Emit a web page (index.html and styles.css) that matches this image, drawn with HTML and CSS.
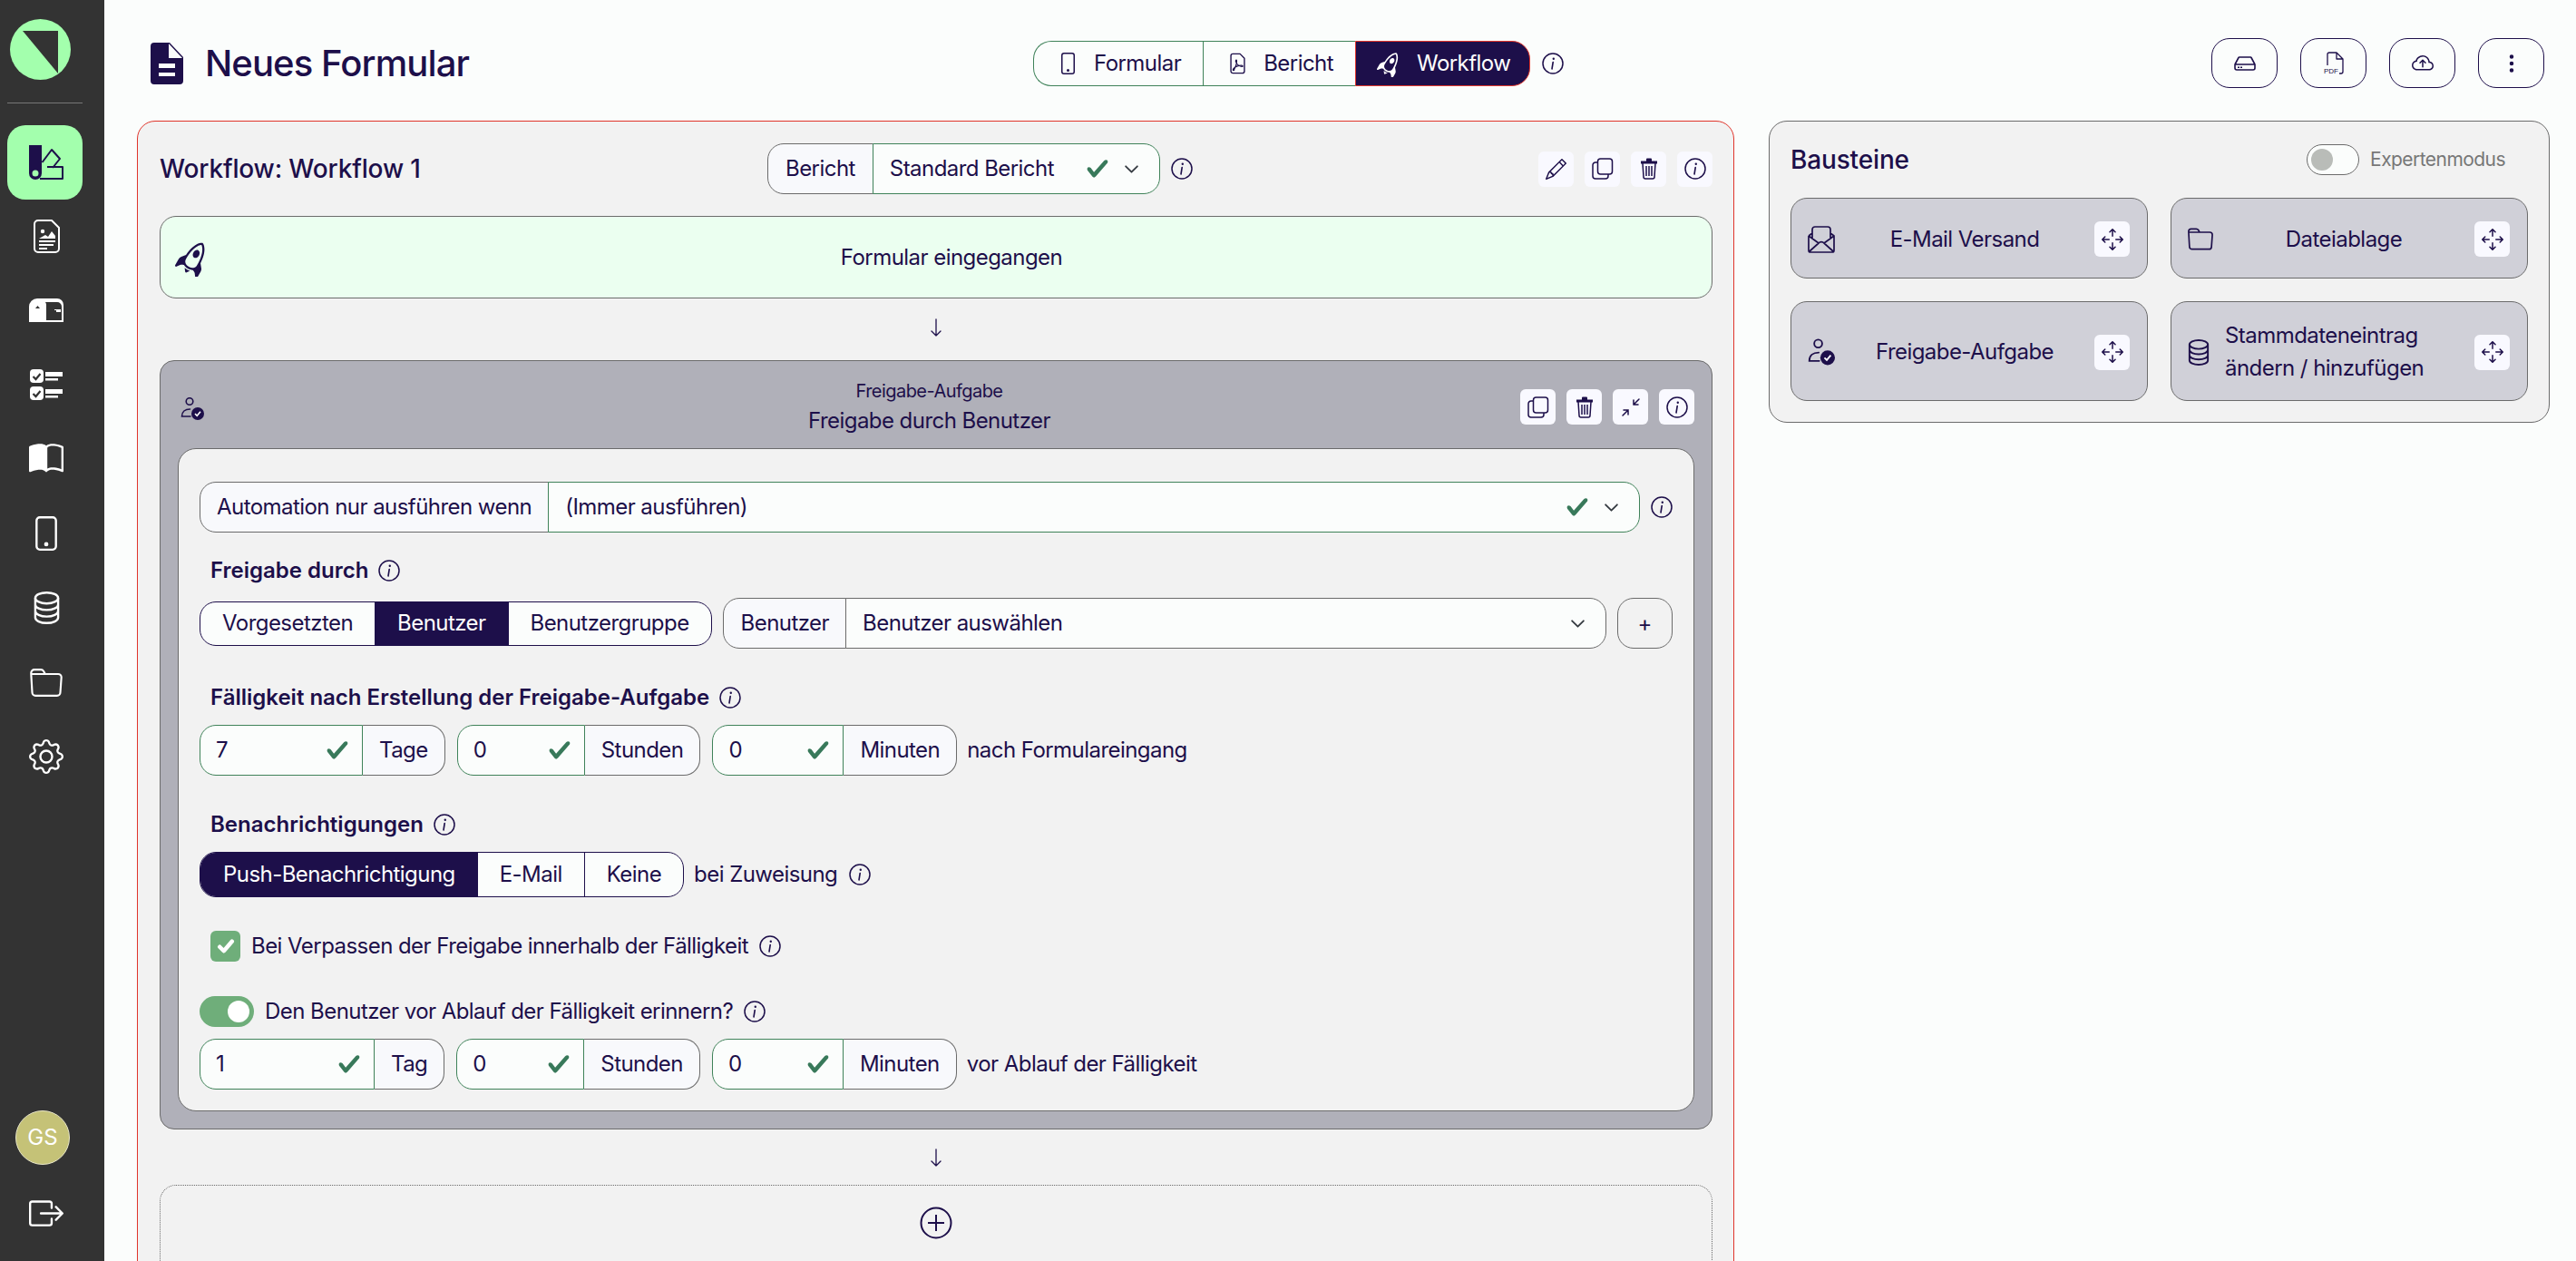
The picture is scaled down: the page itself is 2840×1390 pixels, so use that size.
FILE: index.html
```html
<!DOCTYPE html>
<html lang="de">
<head>
  <meta charset="UTF-8">
  <meta name="viewport" content="width=device-width, initial-scale=1.0">
  <title>Neues Formular</title>
  <link rel="stylesheet" href="styles.css">
</head>
<body>
  <svg class="sprite" xmlns="http://www.w3.org/2000/svg">
    <symbol id="i-info" viewBox="0 0 24 24"><circle cx="12" cy="12" r="11" fill="none" stroke="currentColor" stroke-width="1.5"/><path d="M12.2 10.5 11 18" fill="none" stroke="currentColor" stroke-width="1.6" stroke-linecap="round"/><circle cx="12.8" cy="6.8" r="1.2" fill="currentColor"/></symbol>
    <symbol id="i-check" viewBox="0 0 8 8"><path fill="currentColor" d="M2.3 6.73.6 4.53c-.4-1.04.46-1.4 1.1-.8l1.1 1.4 3.4-3.8c.6-.63 1.6-.27 1.2.7l-4 4.6c-.43.5-.8.4-1.1.1z"/></symbol>
    <symbol id="i-chevron" viewBox="0 0 16 16"><path fill="none" stroke="currentColor" stroke-width="1.7" stroke-linecap="round" stroke-linejoin="round" d="m2 5 6 6 6-6"/></symbol>
    <symbol id="i-doc" viewBox="0 0 36 46"><path fill="currentColor" d="M4 0H20V17H36V42a4 4 0 0 1-4 4H4a4 4 0 0 1-4-4V4a4 4 0 0 1 4-4z"/><path fill="none" stroke="currentColor" stroke-width="1.5" d="M20 0 36 17"/><path fill="#fbfdfc" d="M9 23H27V28H9zM9 33H27V37H9z"/></symbol>
    <symbol id="i-swatch" viewBox="0 0 38 38"><path fill="currentColor" fill-rule="evenodd" d="M0 0H14V31a7 7 0 0 1-14 0zM7 27.500a3.500 3.500 0 1 0 0 7 3.500 3.500 0 0 0 0-7z"/><path fill="none" stroke="currentColor" stroke-width="2" stroke-linejoin="round" d="M14.500 19 25 5 34 15 26 25M12 37H37V24H20"/></symbol>
    <symbol id="i-form" viewBox="0 0 29 37"><path fill="none" stroke="currentColor" stroke-width="2" stroke-linejoin="round" d="M5 1H20L28 9V32a4 4 0 0 1-4 4H5a4 4 0 0 1-4-4V5a4 4 0 0 1 4-4z"/><circle cx="10" cy="13" r="2.200" fill="currentColor"/><path fill="currentColor" d="M6 21 13 17 16 19 20 13 24 18V21zM6 23H24V25H6zM6 27H22V29H6zM6 31H15V33H6z"/></symbol>
    <symbol id="i-mailbox" viewBox="0 0 38 26"><path fill="currentColor" d="M9 0H31a7 7 0 0 1 7 7V26H0V9A9 9 0 0 1 9 0z"/><path fill="#333" d="M19 7a5 5 0 0 0-1-3H31a5 5 0 0 1 5 5V24H19z"/><path fill="currentColor" d="M28 12H35V15H30V13H28z"/><path fill="#333" d="M7 11 9.500 8 12 11z"/></symbol>
    <symbol id="i-tasks" viewBox="0 0 36 34"><g fill="currentColor"><rect width="15" height="15" rx="4"/><rect y="19" width="15" height="15" rx="4"/><rect x="17" y="3" width="19" height="5"/><rect x="17" y="10" width="14" height="2.500"/><rect x="17" y="22" width="19" height="5"/><rect x="17" y="29" width="14" height="2.500"/></g><path fill="none" stroke="#333" stroke-width="2.200" d="m3.500 8 3 3 5-6M3.500 27l3 3 5-6"/></symbol>
    <symbol id="i-book" viewBox="0 0 16 16"><path fill="currentColor" d="M8.500 2.687c.654-.689 1.782-.886 3.112-.752 1.234.124 2.503.523 3.388.893v9.923c-.918-.35-2.107-.692-3.287-.81-1.094-.111-2.278-.039-3.213.492zM8 1.783C7.015.936 5.587.81 4.287.94c-1.514.153-3.042.672-3.994 1.105A.5.5 0 0 0 0 2.500v11a.5.5 0 0 0 .707.455c.882-.4 2.303-.881 3.680-1.020 1.409-.142 2.590.087 3.223.877a.5.5 0 0 0 .78 0c.633-.79 1.814-1.019 3.222-.877 1.378.139 2.800.62 3.681 1.020A.5.5 0 0 0 16 13.500v-11a.5.5 0 0 0-.293-.455c-.952-.433-2.480-.952-3.994-1.105C10.413.809 8.985.936 8 1.783"/></symbol>
    <symbol id="i-phone" viewBox="3 0 10 16"><path fill="currentColor" d="M11 1a1 1 0 0 1 1 1v12a1 1 0 0 1-1 1H5a1 1 0 0 1-1-1V2a1 1 0 0 1 1-1zM5 0a2 2 0 0 0-2 2v12a2 2 0 0 0 2 2h6a2 2 0 0 0 2-2V2a2 2 0 0 0-2-2z"/><path fill="currentColor" d="M8 14a1 1 0 1 0 0-2 1 1 0 0 0 0 2"/></symbol>
    <symbol id="i-db" viewBox="0 0 24 30"><g fill="none" stroke="currentColor" stroke-width="2"><ellipse cx="12" cy="6" rx="10.500" ry="5"/><path d="M1.500 6V24c0 2.800 4.700 5 10.500 5s10.500-2.200 10.500-5V6M1.500 12c0 2.800 4.700 5 10.500 5s10.500-2.200 10.500-5M1.500 18c0 2.800 4.700 5 10.500 5s10.500-2.200 10.500-5"/></g></symbol>
    <symbol id="i-folder" viewBox="0 0 30 26"><path fill="none" stroke="currentColor" stroke-width="1.800" stroke-linejoin="round" d="M1 5V4a3 3 0 0 1 3-3h6a3 3 0 0 1 2.500 1.300L14 5H26a3 3 0 0 1 3 3L28 22a3 3 0 0 1-3 3H5a3 3 0 0 1-3-3L1 5H14"/></symbol>
    <symbol id="i-gear" viewBox="0 0 16 16"><path fill="currentColor" d="M8 4.754a3.246 3.246 0 1 0 0 6.492 3.246 3.246 0 0 0 0-6.492M5.754 8a2.246 2.246 0 1 1 4.492 0 2.246 2.246 0 0 1-4.492 0"/><path fill="currentColor" d="M9.796 1.343c-.527-1.790-3.065-1.790-3.592 0l-.094.319a.873.873 0 0 1-1.255.52l-.292-.16c-1.640-.892-3.433.902-2.540 2.541l.159.292a.873.873 0 0 1-.52 1.255l-.319.094c-1.790.527-1.790 3.065 0 3.592l.319.094a.873.873 0 0 1 .52 1.255l-.16.292c-.892 1.640.901 3.434 2.541 2.540l.292-.159a.873.873 0 0 1 1.255.52l.094.319c.527 1.790 3.065 1.790 3.592 0l.094-.319a.873.873 0 0 1 1.255-.52l.292.16c1.640.893 3.434-.902 2.540-2.541l-.159-.292a.873.873 0 0 1 .52-1.255l.319-.094c1.790-.527 1.790-3.065 0-3.592l-.319-.094a.873.873 0 0 1-.52-1.255l.16-.292c.893-1.640-.902-3.433-2.541-2.540l-.292.159a.873.873 0 0 1-1.255-.52zm-2.633.283c.246-.835 1.428-.835 1.674 0l.094.319a1.873 1.873 0 0 0 2.693 1.115l.291-.16c.764-.415 1.600.42 1.184 1.185l-.159.292a1.873 1.873 0 0 0 1.116 2.692l.318.094c.835.246.835 1.428 0 1.674l-.319.094a1.873 1.873 0 0 0-1.115 2.693l.16.291c.415.764-.42 1.600-1.185 1.184l-.291-.159a1.873 1.873 0 0 0-2.693 1.116l-.094.318c-.246.835-1.428.835-1.674 0l-.094-.319a1.873 1.873 0 0 0-2.692-1.115l-.292.16c-.764.415-1.600-.42-1.184-1.185l.159-.291A1.873 1.873 0 0 0 1.945 8.930l-.319-.094c-.835-.246-.835-1.428 0-1.674l.319-.094A1.873 1.873 0 0 0 3.060 4.377l-.16-.292c-.415-.764.42-1.600 1.185-1.184l.292.159a1.873 1.873 0 0 0 2.692-1.115z"/></symbol>
    <symbol id="i-logout" viewBox="0 2 16 12"><path fill="currentColor" d="M10 12.500a.5.5 0 0 1-.5.5h-8a.5.5 0 0 1-.5-.5v-9a.5.5 0 0 1 .5-.5h8a.5.5 0 0 1 .5.5v2a.5.5 0 0 0 1 0v-2A1.500 1.500 0 0 0 9.500 2h-8A1.500 1.500 0 0 0 0 3.500v9A1.500 1.500 0 0 0 1.500 14h8a1.500 1.500 0 0 0 1.500-1.500v-2a.5.5 0 0 0-1 0z"/><path fill="currentColor" d="M15.854 8.354a.5.5 0 0 0 0-.708l-3-3a.5.5 0 0 0-.708.708L14.293 7.500H5.500a.5.5 0 0 0 0 1h8.793l-2.147 2.146a.5.5 0 0 0 .708.708z"/></symbol>
    <symbol id="i-rocket" viewBox="-1 -1 18 18"><g transform="rotate(30 8 8)" fill="currentColor"><path d="M8 8c.828 0 1.500-.895 1.500-2S8.828 4 8 4s-1.500.895-1.500 2S7.172 8 8 8"/><path d="M11.953 8.810c-.195-3.388-.968-5.507-1.777-6.819C9.707 1.233 9.230.751 8.857.454a3.500 3.500 0 0 0-.463-.315A2 2 0 0 0 8.250.064.55.55 0 0 0 8 0a.55.55 0 0 0-.266.073 2 2 0 0 0-.142.08 4 4 0 0 0-.459.33c-.37.308-.844.803-1.310 1.570-.805 1.322-1.577 3.433-1.774 6.756l-1.497 1.826-.004.005A2.500 2.500 0 0 0 2 12.202V15.500a.5.5 0 0 0 .9.3l1.125-1.500c.166-.222.42-.4.752-.57.214-.108.414-.192.625-.281l.198-.084c.7.428 1.550.635 2.400.635s1.700-.207 2.400-.635q.1.044.196.083c.213.09.413.174.627.282.332.17.586.348.752.57l1.125 1.500a.5.5 0 0 0 .9-.3v-3.298a2.500 2.500 0 0 0-.548-1.562zM8.009 1.073q.096.06.226.163c.284.226.683.621 1.090 1.280C10.137 3.836 11 6.237 11 10.500c0 .858-.374 1.480-.943 1.893C9.517 12.786 8.781 13 8 13s-1.517-.214-2.057-.607C5.373 11.979 5 11.358 5 10.500c0-4.182.86-6.586 1.677-7.928.409-.67.81-1.082 1.096-1.320q.136-.113.236-.18Z"/><path d="M9.479 14.361c-.48.093-.98.139-1.479.139s-.999-.046-1.479-.139L7.600 15.800a.5.5 0 0 0 .8 0z"/><path d="M4.200 9.500 2.500 11.500V15L5 13 4.200 9.500zM11.800 9.500 13.500 11.500V15L11 13z"/></g></symbol>
    <symbol id="i-pdf-file" viewBox="0 0 16 22"><path fill="none" stroke="currentColor" stroke-width="1.300" stroke-linejoin="round" d="M3 1H10.500L15 5.500V19a2 2 0 0 1-2 2H3a2 2 0 0 1-2-2V3a2 2 0 0 1 2-2z"/><path fill="none" stroke="currentColor" stroke-width="1.100" d="M3 18C5.500 17 7.500 10 7 8c-.4-1.500-1.500-.3-.8 1.500.8 2.200 3.800 4.800 6.300 4.800 1.200 0 .8-1.300-.5-1.300-2.500 0-6.500 1-8.500 3.500-.7.9-.3 2.200.5 1.500z"/></symbol>
    <symbol id="i-pencil" viewBox="0 0 16 16"><path fill="currentColor" d="M12.146.146a.5.5 0 0 1 .708 0l3 3a.5.5 0 0 1 0 .708l-10 10a.5.5 0 0 1-.168.11l-5 2a.5.5 0 0 1-.65-.65l2-5a.5.5 0 0 1 .11-.168zM11.207 2.500 13.500 4.793 14.793 3.500 12.500 1.207zm1.586 3L10.500 3.207 4 9.707V10h.5a.5.5 0 0 1 .5.5v.5h.5a.5.5 0 0 1 .5.5v.5h.293zm-9.761 5.175-.106.106-1.528 3.821 3.821-1.528.106-.106A.5.5 0 0 1 5 12.500V12h-.5a.5.5 0 0 1-.5-.5V11h-.5a.5.5 0 0 1-.468-.325"/></symbol>
    <symbol id="i-copy" viewBox="0 0 24 24"><g fill="none" stroke="currentColor" stroke-width="1.500" stroke-linejoin="round"><rect x="6.500" y="1" width="16" height="17" rx="3"/><path d="M6.500 5H4a3 3 0 0 0-3 3V20a3 3 0 0 0 3 3H15a3 3 0 0 0 3-3V18"/></g></symbol>
    <symbol id="i-trash" viewBox="0 0 20 24"><g fill="none" stroke="currentColor" stroke-width="1.500" stroke-linejoin="round"><path d="M3 6 4 21a2 2 0 0 0 2 2H14a2 2 0 0 0 2-2L17 6M7 9V20M10 9V20M13 9V20"/></g><path fill="currentColor" d="M1 3.500H7V1.500A1 1 0 0 1 8 .5H12A1 1 0 0 1 13 1.500V3.500H19V6.500H1z"/></symbol>
    <symbol id="i-contract" viewBox="0 0 24 24"><path fill="none" stroke="currentColor" stroke-width="1.500" stroke-linecap="round" d="M21 3 15 9M15 4V9H20M3 21 9 15M4 15H9V20"/></symbol>
    <symbol id="i-move" viewBox="0 0 16 16"><path fill="currentColor" d="M7.646.146a.5.5 0 0 1 .708 0l2 2a.5.5 0 0 1-.708.708L8.500 1.707V5.500a.5.5 0 0 1-1 0V1.707L6.354 2.854a.5.5 0 1 1-.708-.708zM8 10a.5.5 0 0 1 .5.5v3.793l1.146-1.147a.5.5 0 0 1 .708.708l-2 2a.5.5 0 0 1-.708 0l-2-2a.5.5 0 0 1 .708-.708L7.500 14.293V10.500A.5.5 0 0 1 8 10M.146 8.354a.5.5 0 0 1 0-.708l2-2a.5.5 0 1 1 .708.708L1.707 7.500H5.500a.5.5 0 0 1 0 1H1.707l1.147 1.146a.5.5 0 0 1-.708.708zM10 8a.5.5 0 0 1 .5-.5h3.793l-1.147-1.146a.5.5 0 0 1 .708-.708l2 2a.5.5 0 0 1 0 .708l-2 2a.5.5 0 0 1-.708-.708L14.293 8.500H10.500A.5.5 0 0 1 10 8"/></symbol>
    <symbol id="i-user-check" viewBox="0 0 26 25"><g fill="none" stroke="currentColor" stroke-width="1.600" stroke-linecap="round"><circle cx="10" cy="4.500" r="3.800"/><path d="M11 21H1.500C1.500 16 5 13 10.500 13"/></g><circle cx="19" cy="18" r="7" fill="currentColor"/><path fill="none" stroke="#fff" stroke-width="1.600" d="m16 18 2.200 2.200 3.800-4.500"/></symbol>
    <symbol id="i-drive" viewBox="0 0 24 16"><path fill="none" stroke="currentColor" stroke-width="1.600" stroke-linejoin="round" d="M1 9 5 1.500A1 1 0 0 1 6 1H18a1 1 0 0 1 1 .5L23 9M1 9H23V13a2 2 0 0 1-2 2H3a2 2 0 0 1-2-2z"/><path fill="currentColor" d="M4 11.500H6V13H4zM7 11.500H9V13H7z"/></symbol>
    <symbol id="i-pdf" viewBox="0 0 22 25"><path fill="none" stroke="currentColor" stroke-width="1.300" stroke-linejoin="round" d="M4 15V3a2 2 0 0 1 2-2H14L21 8V22a2 2 0 0 1-2 2H17M14 1V8H21"/><text x="0" y="24" class="pdf-mark">PDF</text></symbol>
    <symbol id="i-cloud" viewBox="0 0 16 16"><path fill="currentColor" d="M7.646 5.146a.5.5 0 0 1 .708 0l2 2a.5.5 0 0 1-.708.708L8.500 6.707V10.500a.5.5 0 0 1-1 0V6.707L6.354 7.854a.5.5 0 1 1-.708-.708z"/><path fill="currentColor" d="M4.406 3.342A5.530 5.530 0 0 1 8 2c2.690 0 4.923 2 5.166 4.579C14.758 6.804 16 8.137 16 9.773 16 11.569 14.502 13 12.687 13H3.781C1.708 13 0 11.366 0 9.318c0-1.763 1.266-3.223 2.942-3.593.143-.863.698-1.723 1.464-2.383m.653.757c-.757.653-1.153 1.440-1.153 2.056v.448l-.445.049C2.064 6.805 1 7.952 1 9.318 1 10.785 2.230 12 3.781 12h8.906C13.980 12 15 10.988 15 9.773c0-1.216-1.020-2.228-2.313-2.228h-.5v-.5C12.188 4.825 10.328 3 8 3a4.530 4.530 0 0 0-2.941 1.100z"/></symbol>
    <symbol id="i-dots" viewBox="0 0 16 16"><path fill="currentColor" d="M9.500 13a1.500 1.500 0 1 1-3 0 1.500 1.500 0 0 1 3 0m0-5a1.500 1.500 0 1 1-3 0 1.500 1.500 0 0 1 3 0m0-5a1.500 1.500 0 1 1-3 0 1.500 1.500 0 0 1 3 0"/></symbol>
    <symbol id="i-mail" viewBox="0 0 30 30"><path fill="none" stroke="currentColor" stroke-width="1.700" stroke-linejoin="round" d="M1 11V27a2 2 0 0 0 2 2H27a2 2 0 0 0 2-2V11L25 8M1 11 5 8M1 11 12 19M29 11 18 19M2 28 12 19a4 4 0 0 1 6 0L28 28M5 14V4a3 3 0 0 1 3-3H22a3 3 0 0 1 3 3V14"/></symbol>
    <symbol id="i-plus-circle" viewBox="0 0 36 36"><g fill="none" stroke="currentColor" stroke-width="2"><circle cx="18" cy="18" r="16.500"/><path d="M18 9V27M9 18H27"/></g></symbol>
    <symbol id="i-down" viewBox="0 0 16 20"><path fill="none" stroke="currentColor" stroke-width="1.300" stroke-linecap="round" stroke-linejoin="round" d="M8 1V19M3 14 8 19 13 14"/></symbol>
  </svg>

  <div class="app">
    <nav class="sidebar">
      <div class="logo">
        <svg viewBox="0 0 67 67"><circle cx="33.500" cy="33.500" r="33.500" fill="#a3ffad"/><path d="M14 13H53V60z" fill="#333"/></svg>
      </div>
      <hr class="side-rule">
      <a class="side-item active"><svg class="ico-38"><use href="#i-swatch"/></svg></a>
      <a class="side-item"><svg class="ico-form"><use href="#i-form"/></svg></a>
      <a class="side-item"><svg class="ico-mailbox"><use href="#i-mailbox"/></svg></a>
      <a class="side-item"><svg class="ico-tasks"><use href="#i-tasks"/></svg></a>
      <a class="side-item"><svg class="ico-38"><use href="#i-book"/></svg></a>
      <a class="side-item"><svg class="ico-38"><use href="#i-phone"/></svg></a>
      <a class="side-item"><svg class="ico-db"><use href="#i-db"/></svg></a>
      <a class="side-item"><svg class="ico-folder"><use href="#i-folder"/></svg></a>
      <a class="side-item"><svg class="ico-38"><use href="#i-gear"/></svg></a>
      <div class="side-bottom">
        <div class="avatar">GS</div>
        <a class="side-item"><svg class="ico-logout"><use href="#i-logout"/></svg></a>
      </div>
    </nav>

    <div class="main">
      <header class="page-head">
        <div class="page-title">
          <svg class="ico-title"><use href="#i-doc"/></svg>
          <h1>Neues Formular</h1>
        </div>
        <div class="view-switch">
          <div class="tabs">
            <a class="tab"><svg class="ico-tab"><use href="#i-phone"/></svg>Formular</a>
            <a class="tab"><svg class="ico-tab"><use href="#i-pdf-file"/></svg>Bericht</a>
            <a class="tab current"><svg class="ico-rocket-sm"><use href="#i-rocket"/></svg>Workflow</a>
          </div>
          <svg class="info"><use href="#i-info"/></svg>
        </div>
        <div class="head-actions">
          <button class="head-btn"><svg class="ico-drive"><use href="#i-drive"/></svg></button>
          <button class="head-btn"><svg class="ico-pdf"><use href="#i-pdf"/></svg></button>
          <button class="head-btn"><svg class="ico-24"><use href="#i-cloud"/></svg></button>
          <button class="head-btn"><svg class="ico-24"><use href="#i-dots"/></svg></button>
        </div>
      </header>

      <div class="columns">
        <section class="workflow">
          <div class="workflow-head">
            <h2>Workflow: Workflow 1</h2>
            <div class="group group-report">
              <span class="addon addon-first">Bericht</span>
              <span class="select select-last">Standard Bericht
                <svg class="ok ok-push"><use href="#i-check"/></svg>
                <svg class="chevron"><use href="#i-chevron"/></svg>
              </span>
            </div>
            <svg class="info"><use href="#i-info"/></svg>
            <div class="icon-btns">
              <button class="icon-btn"><svg class="ico-22"><use href="#i-pencil"/></svg></button>
              <button class="icon-btn"><svg class="ico-24"><use href="#i-copy"/></svg></button>
              <button class="icon-btn"><svg class="ico-trash"><use href="#i-trash"/></svg></button>
              <button class="icon-btn"><svg class="info"><use href="#i-info"/></svg></button>
            </div>
          </div>

          <div class="trigger">
            <svg class="ico-rocket"><use href="#i-rocket"/></svg>
            <span>Formular eingegangen</span>
          </div>
          <div class="flow-arrow"><svg class="ico-down"><use href="#i-down"/></svg></div>

          <article class="step">
            <div class="step-head">
              <div class="step-icon"><svg class="ico-user"><use href="#i-user-check"/></svg></div>
              <div class="step-title">
                <small>Freigabe-Aufgabe</small>
                <strong>Freigabe durch Benutzer</strong>
              </div>
              <div class="icon-btns">
                <button class="icon-btn"><svg class="ico-24"><use href="#i-copy"/></svg></button>
                <button class="icon-btn"><svg class="ico-trash"><use href="#i-trash"/></svg></button>
                <button class="icon-btn"><svg class="ico-24"><use href="#i-contract"/></svg></button>
                <button class="icon-btn"><svg class="info"><use href="#i-info"/></svg></button>
              </div>
            </div>

            <div class="step-body">
              <div class="row">
                <div class="group group-wide">
                  <span class="addon addon-first">Automation nur ausführen wenn</span>
                  <span class="select select-last select-fill">(Immer ausführen)
                    <svg class="ok ok-push"><use href="#i-check"/></svg>
                    <svg class="chevron"><use href="#i-chevron"/></svg>
                  </span>
                </div>
                <svg class="info"><use href="#i-info"/></svg>
              </div>

              <div class="label">Freigabe durch <svg class="info"><use href="#i-info"/></svg></div>
              <div class="row">
                <div class="segment">
                  <a class="seg">Vorgesetzten</a>
                  <a class="seg seg-on">Benutzer</a>
                  <a class="seg">Benutzergruppe</a>
                </div>
                <div class="group group-wide">
                  <span class="addon addon-first addon-grey">Benutzer</span>
                  <span class="select select-last select-fill select-grey">Benutzer auswählen
                    <svg class="chevron ok-push"><use href="#i-chevron"/></svg>
                  </span>
                </div>
                <button class="plus-btn">+</button>
              </div>

              <div class="label label-gap">Fälligkeit nach Erstellung der Freigabe-Aufgabe <svg class="info"><use href="#i-info"/></svg></div>
              <div class="row row-tight">
                <div class="group">
                  <span class="field field-l">7<svg class="ok"><use href="#i-check"/></svg></span>
                  <span class="addon addon-last">Tage</span>
                </div>
                <div class="group">
                  <span class="field field-m">0<svg class="ok"><use href="#i-check"/></svg></span>
                  <span class="addon addon-last">Stunden</span>
                </div>
                <div class="group">
                  <span class="field field-n">0<svg class="ok"><use href="#i-check"/></svg></span>
                  <span class="addon addon-last">Minuten</span>
                </div>
                <span class="after">nach Formulareingang</span>
              </div>

              <div class="label label-gap">Benachrichtigungen <svg class="info"><use href="#i-info"/></svg></div>
              <div class="row row-tight">
                <div class="segment segment-tall">
                  <a class="seg seg-on">Push-Benachrichtigung</a>
                  <a class="seg seg-line">E-Mail</a>
                  <a class="seg">Keine</a>
                </div>
                <span class="after">bei Zuweisung</span>
                <svg class="info"><use href="#i-info"/></svg>
              </div>

              <label class="check-row">
                <span class="checkbox"><svg viewBox="0 0 16 16"><path fill="none" stroke="#fff" stroke-width="3" stroke-linecap="round" stroke-linejoin="round" d="m3.500 8.500 3 3 6-7"/></svg></span>
                Bei Verpassen der Freigabe innerhalb der Fälligkeit
                <svg class="info"><use href="#i-info"/></svg>
              </label>

              <div class="toggle-row">
                <span class="switch switch-on"></span>
                Den Benutzer vor Ablauf der Fälligkeit erinnern?
                <svg class="info"><use href="#i-info"/></svg>
              </div>
              <div class="row row-tight">
                <div class="group">
                  <span class="field field-xl">1<svg class="ok"><use href="#i-check"/></svg></span>
                  <span class="addon addon-last addon-tag">Tag</span>
                </div>
                <div class="group">
                  <span class="field field-m">0<svg class="ok"><use href="#i-check"/></svg></span>
                  <span class="addon addon-last">Stunden</span>
                </div>
                <div class="group">
                  <span class="field field-n">0<svg class="ok"><use href="#i-check"/></svg></span>
                  <span class="addon addon-last">Minuten</span>
                </div>
                <span class="after">vor Ablauf der Fälligkeit</span>
              </div>
            </div>
          </article>

          <div class="flow-arrow flow-arrow-low"><svg class="ico-down"><use href="#i-down"/></svg></div>
          <div class="drop-zone"><svg class="ico-plus"><use href="#i-plus-circle"/></svg></div>
        </section>

        <aside class="blocks">
          <div class="blocks-head">
            <h2>Bausteine</h2>
            <div class="expert"><span class="switch"></span>Expertenmodus</div>
          </div>
          <div class="block-grid">
            <div class="block">
              <svg class="ico-block"><use href="#i-mail"/></svg>
              <span>E-Mail Versand</span>
              <button class="icon-btn"><svg class="ico-24"><use href="#i-move"/></svg></button>
            </div>
            <div class="block">
              <svg class="ico-block-folder"><use href="#i-folder"/></svg>
              <span>Dateiablage</span>
              <button class="icon-btn"><svg class="ico-24"><use href="#i-move"/></svg></button>
            </div>
            <div class="block block-tall">
              <svg class="ico-block"><use href="#i-user-check"/></svg>
              <span>Freigabe-Aufgabe</span>
              <button class="icon-btn"><svg class="ico-24"><use href="#i-move"/></svg></button>
            </div>
            <div class="block block-tall">
              <svg class="ico-block-db"><use href="#i-db"/></svg>
              <span class="block-two">Stammdateneintrag ändern / hinzufügen</span>
              <button class="icon-btn"><svg class="ico-24"><use href="#i-move"/></svg></button>
            </div>
          </div>
        </aside>
      </div>
    </div>
  </div>
</body>
</html>
```

FILE: styles.css
```css
:root {
  --navy: #1d0f4a;
  --green: #3f8259;
  --check: #38795a;
  --soft-green: #6fae7a;
  --mint: #a3ffad;
  --line: #6b6b6b;
  --panel: #f2f2f2;
  --page: #fbfdfc;
  --cell: #f8f9fc;
}

* {
  box-sizing: border-box;
}

html, body {
  height: 100%;
}

body {
  margin: 0;
  overflow: hidden;
  background: var(--page);
  color: var(--navy);
  font-family: Inter, "Noto Sans", sans-serif;
  font-size: 24px;
  line-height: 36px;
  letter-spacing: -0.55px;
}

.sprite {
  display: none;
}

.pdf-mark {
  font-family: "Liberation Sans", sans-serif;
  font-size: 8px;
  fill: currentColor;
}

svg {
  flex: none;
}

.app {
  display: flex;
  height: 1390px;
}

/* sidebar */
.sidebar {
  width: 115px;
  flex: none;
  display: flex;
  flex-direction: column;
  padding: 21px 24px 0 8px;
  background: #333;
  color: #fff;
}

.logo {
  width: 67px;
  height: 67px;
  margin-left: 3px;
}

.logo svg {
  display: block;
}

.side-rule {
  width: 83px;
  margin: 25px 0 24px;
  border: 0;
  border-top: 1px solid #777;
}

.side-item {
  width: 83px;
  height: 82px;
  flex: none;
  display: flex;
  align-items: center;
  justify-content: center;
  padding-left: 3px;
}

.side-item.active {
  background: var(--mint);
  border-radius: 20px;
  color: var(--navy);
  margin-bottom: -1px;
}

.side-bottom {
  margin-top: auto;
  display: flex;
  flex-direction: column;
  align-items: center;
  padding-bottom: 19px;
}

.side-bottom .side-item {
  height: 68px;
}

.avatar {
  width: 60px;
  height: 60px;
  margin: 0 5px 19px 0;
  border: 1px solid #e8e6c8;
  border-radius: 50%;
  background: #c5c277;
  color: #fff;
  font-size: 24px;
  line-height: 58px;
  letter-spacing: 0;
  text-align: center;
}

.ico-38 { width: 38px; height: 38px; }
.ico-form { width: 29px; height: 37px; }
.ico-mailbox { width: 38px; height: 26px; }
.ico-tasks { width: 36px; height: 34px; }
.ico-db { width: 29px; height: 36px; }
.ico-folder { width: 36px; height: 31px; }
.ico-logout { width: 38px; height: 29px; }
.ico-24 { width: 24px; height: 24px; }
.ico-22 { width: 23px; height: 23px; }
.ico-trash { width: 20px; height: 24px; }
.ico-title { width: 36px; height: 46px; }
.ico-tab { width: 17px; height: 24px; margin-right: 20px; }
.ico-rocket-sm { width: 30px; height: 30px; margin-right: 14px; }
.ico-rocket { width: 42px; height: 42px; }
.ico-drive { width: 24px; height: 16px; }
.ico-pdf { width: 22px; height: 25px; }
.ico-user { width: 26px; height: 25px; }
.ico-down { width: 16px; height: 20px; }
.ico-plus { width: 36px; height: 36px; }
.ico-block { width: 30px; height: 30px; }
.ico-block-folder { width: 28px; height: 25px; }
.ico-block-db { width: 24px; height: 29px; }

.info {
  width: 24px;
  height: 24px;
}

.ok {
  width: 26px;
  height: 26px;
  color: var(--check);
}

.chevron {
  width: 17px;
  height: 17px;
  margin-left: 16px;
  color: #343a40;
}

.ok-push {
  margin-left: auto;
}

/* header */
.main {
  flex: 1;
  min-width: 0;
  padding: 0 29px 0 36px;
}

.page-head {
  height: 133px;
  display: grid;
  grid-template-columns: 988px 1fr auto;
  align-items: center;
  padding: 6px 6px 0 0;
}

.page-title {
  display: flex;
  align-items: center;
  gap: 24px;
  padding-left: 15px;
}

h1 {
  margin: 0;
  font-size: 40px;
  font-weight: 500;
  line-height: 48px;
  letter-spacing: -0.9px;
}

h2 {
  margin: 0;
  font-size: 28px;
  font-weight: 500;
  line-height: 36px;
  letter-spacing: -0.15px;
}

.view-switch {
  display: flex;
  align-items: center;
  gap: 13px;
}

.tabs {
  display: flex;
  height: 50px;
}

.tab {
  display: flex;
  align-items: center;
  padding: 0 24px 0 29px;
  border: 1px solid var(--green);
  border-right: 0;
  background: var(--page);
}

.tab:first-child {
  border-radius: 20px 0 0 20px;
}

.tab.current {
  padding: 0 21px 0 23px;
  background: var(--navy);
  color: #fff;
  border: 1px solid #e0352b;
  border-radius: 0 20px 20px 0;
}

.head-actions {
  display: flex;
  gap: 25px;
}

.head-btn {
  width: 73px;
  height: 55px;
  display: flex;
  align-items: center;
  justify-content: center;
  padding: 0;
  border: 1px solid var(--navy);
  border-radius: 20px;
  background: var(--page);
  color: var(--navy);
}

.columns {
  display: grid;
  grid-template-columns: 1761px 861px;
  gap: 38px;
  align-items: start;
}

/* workflow */
.workflow {
  height: 1300px;
  padding: 24px 23px 0 24px;
  border: 1px solid #e0352b;
  border-radius: 20px;
  background: var(--panel);
}

.workflow-head {
  display: flex;
  align-items: center;
  gap: 12px;
  margin-bottom: 24px;
}

.workflow-head h2 {
  width: 658px;
}

.workflow-head .icon-btns {
  margin-left: auto;
}

.icon-btns {
  display: flex;
  gap: 12px;
}

.icon-btn {
  width: 39px;
  height: 39px;
  flex: none;
  display: flex;
  align-items: center;
  justify-content: center;
  padding: 0;
  border: 0;
  border-radius: 6px;
  background: #f9f9ff;
  color: var(--navy);
}

.trigger {
  height: 91px;
  display: flex;
  align-items: center;
  padding: 0 18px 0 16px;
  border: 1px solid var(--line);
  border-radius: 18px;
  background: #ebfff0;
}

.trigger span {
  flex: 1;
  padding-right: 6px;
  text-align: center;
}

.flow-arrow {
  height: 68px;
  display: flex;
  align-items: center;
  justify-content: center;
  padding-bottom: 4px;
}

.flow-arrow-low {
  height: 61px;
  padding-bottom: 0;
}

.step {
  padding: 0 19px 19px;
  border: 1px solid var(--line);
  border-radius: 16px;
  background: #b0b0b9;
}

.step-head {
  height: 96px;
  display: flex;
  align-items: center;
  padding-top: 5px;
}

.step-icon {
  width: 177px;
  padding: 13px 0 0 3px;
}

.step-title {
  flex: 1;
  display: flex;
  flex-direction: column;
  align-items: center;
}

.step-title small {
  font-size: 20px;
  line-height: 30px;
}

.step-title strong {
  font-weight: 400;
  line-height: 36px;
}

.step-body {
  padding: 36px 23px 23px;
  border: 1px solid var(--line);
  border-radius: 20px;
  background: var(--panel);
}

.row {
  display: flex;
  align-items: center;
  gap: 12px;
}

.row-tight {
  gap: 13px;
}

.group {
  display: flex;
  height: 56px;
}

.group-wide {
  flex: 1;
}

.addon, .field, .select {
  display: flex;
  align-items: center;
  height: 100%;
  border: 1px solid var(--line);
}

.addon {
  padding: 0 18px;
  background: var(--cell);
}

.addon-first {
  border-radius: 18px 0 0 18px;
}

.addon-last {
  border-radius: 0 18px 18px 0;
  border-left: 0;
}

.addon-tag {
  flex: 1;
}

.group-report .addon {
  padding: 0 19px;
}

.select {
  padding: 0 22px 0 18px;
  width: 317px;
  border-color: var(--green);
  background: var(--page);
}

.select-last {
  border-radius: 0 18px 18px 0;
  border-left: 1px solid var(--green);
  margin-left: -1px;
}

.select-fill {
  flex: 1;
  width: auto;
}

.select-grey {
  border-color: var(--line);
}

.addon-grey {
  padding: 0 18px 0 19px;
}

.field {
  justify-content: space-between;
  padding: 0 14px 0 17px;
  border-color: var(--green);
  border-right: 1px solid var(--green);
  border-radius: 18px 0 0 18px;
  background: var(--page);
}

.field-l { width: 180px; }
.field-m { width: 141px; }
.field-n { width: 145px; }
.field-xl { width: 193px; }

.after {
  margin-left: -2px;
}

.label {
  display: flex;
  align-items: center;
  gap: 11px;
  margin: 24px 0 12px 12px;
  font-weight: 600;
  letter-spacing: 0;
}

.label-gap {
  margin-top: 36px;
}

.segment {
  display: flex;
  height: 49px;
  flex: none;
  border: 1px solid var(--navy);
  border-radius: 18px;
  overflow: hidden;
  background: var(--page);
}

.segment-tall {
  height: 50px;
}

.seg {
  display: flex;
  align-items: center;
  padding: 0 24px;
}

.seg-on {
  padding: 0 25px;
  background: var(--navy);
  color: #fff;
}

.seg-line {
  border-right: 1px solid var(--navy);
}

.plus-btn {
  width: 61px;
  height: 56px;
  flex: none;
  padding: 0;
  border: 1px solid var(--line);
  border-radius: 18px;
  background: var(--panel);
  color: var(--navy);
  font: 24px Inter, sans-serif;
}

.check-row, .toggle-row {
  display: flex;
  align-items: center;
  height: 36px;
}

.check-row {
  margin: 36px 0 0 12px;
  gap: 12px;
}

.toggle-row {
  margin: 36px 0 12px;
  gap: 12px;
}

.checkbox {
  width: 33px;
  height: 34px;
  display: flex;
  align-items: center;
  justify-content: center;
  border-radius: 6px;
  background: var(--soft-green);
}

.checkbox svg {
  width: 24px;
  height: 24px;
}

.switch {
  position: relative;
  width: 60px;
  height: 34px;
  flex: none;
  border-radius: 17px;
  background: var(--soft-green);
}

.switch::after {
  content: "";
  position: absolute;
  top: 5px;
  left: 5px;
  width: 24px;
  height: 24px;
  border-radius: 50%;
  background: #b9bcb8;
}

.switch-on::after {
  left: 31px;
  background: #fff;
}

.drop-zone {
  height: 140px;
  padding-top: 23px;
  display: flex;
  justify-content: center;
  align-items: flex-start;
  border: 1px dotted var(--line);
  border-radius: 18px;
}

/* right panel */
.blocks {
  padding: 0 24px 23px 23px;
  border: 1px solid var(--line);
  border-radius: 20px;
  background: var(--panel);
}

.blocks-head {
  height: 84px;
  display: flex;
  align-items: center;
  justify-content: space-between;
  padding-bottom: 1px;
}

.expert {
  display: flex;
  align-items: center;
  gap: 12px;
  padding-right: 24px;
  color: #777;
  font-size: 21px;
}

.expert .switch {
  width: 58px;
  border: 1px solid var(--line);
  background: var(--page);
}

.expert .switch::after {
  top: 4px;
  left: 4px;
}

.block-grid {
  display: grid;
  grid-template-columns: 394px 394px;
  gap: 25px;
}

.block {
  height: 89px;
  display: flex;
  align-items: center;
  padding: 2px 19px 0 18px;
  border: 1px solid var(--line);
  border-radius: 18px;
  background: #d0d0d8;
}

.block-tall {
  height: 110px;
}

.block span {
  flex: 1;
  text-align: center;
}

.block .block-two {
  flex: 1;
  padding: 0 14px 0 17px;
  text-align: left;
}
```
